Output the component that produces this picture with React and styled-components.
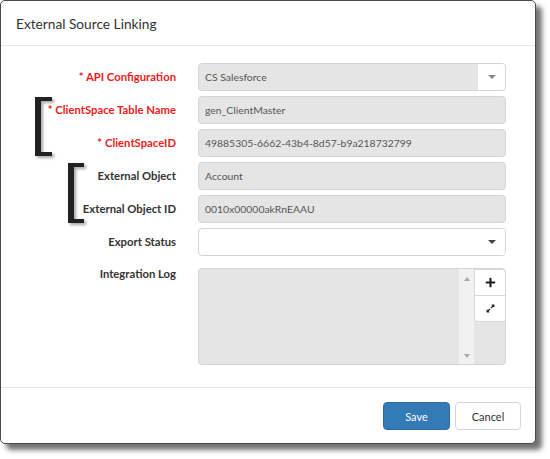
import React from 'react';
import styled, { createGlobalStyle } from 'styled-components';
import { FaPlus, FaExpandAlt } from 'react-icons/fa';

const GlobalStyle = createGlobalStyle`
    html, body {
        margin: 0;
        padding: 0;
        background: #ffffff;
    }
    body {
        font-family: Lato, 'Open Sans', Arial, sans-serif;
    }
`;

const Page = styled.div`
    width: 550px;
    height: 459px;
    overflow: hidden;
    position: relative;
`;

const Dialog = styled.div`
    position: relative;
    box-sizing: border-box;
    width: 536px;
    height: 444px;
    background: #fff;
    border: 1px solid #4a4a4a;
    border-radius: 5px;
    box-shadow: 6px 6px 5px rgba(0, 0, 0, 0.55);
    display: flex;
    flex-direction: column;
`;

const Header = styled.div`
    height: 45px;
    box-sizing: border-box;
    border-bottom: 1px solid #e8e8e8;
    display: flex;
    align-items: center;
    padding-left: 15px;
`;

const Title = styled.h4`
    margin: 0;
    font-size: 13.7px;
    font-weight: 400;
    color: #333;
`;

const Body = styled.div`
    flex: 1;
    padding: 17px 0 0 0;
    display: grid;
    grid-template-columns: 175px 308px;
    column-gap: 22px;
    row-gap: 5px;
    align-content: start;
`;

const Label = styled.label`
    justify-self: end;
    align-self: ${p => (p.top ? 'start' : 'center')};
    font-size: 11.3px;
    font-weight: 700;
    line-height: 14px;
    color: ${p => (p.required ? '#ee1b1b' : '#333')};
    margin-top: ${p => (p.top ? '6px' : '0')};
    white-space: nowrap;
`;

const Field = styled.div`
    box-sizing: border-box;
    height: 28px;
    display: flex;
    align-items: center;
    border: 1px solid #d4d4d4;
    border-radius: 4px;
    background: ${p => (p.empty ? '#fff' : '#e5e5e5')};
    font-size: 10.4px;
    color: #555;
    overflow: hidden;
`;

const FieldText = styled.span`
    flex: 1;
    padding-left: 6px;
    white-space: nowrap;
`;

const CaretBox = styled.div`
    width: 27px;
    height: 100%;
    background: #fff;
    display: flex;
    align-items: center;
    justify-content: center;
`;

const Caret = styled.span`
    width: 0;
    height: 0;
    border-left: 4px solid transparent;
    border-right: 4px solid transparent;
    border-top: 4px solid ${p => p.color || '#888'};
`;

const LogBox = styled.div`
    box-sizing: border-box;
    height: 97px;
    margin-top: 7px;
    display: flex;
    border: 1px solid #d4d4d4;
    border-radius: 4px;
    background: #e5e5e5;
    overflow: hidden;
`;

const LogText = styled.div`
    flex: 1;
`;

const ScrollBar = styled.div`
    width: 15px;
    background: #f1f1f1;
    display: flex;
    flex-direction: column;
    align-items: center;
    justify-content: space-between;
    padding: 8px 0 6px;
`;

const ScrollArrow = styled.span`
    width: 0;
    height: 0;
    border-left: 3.5px solid transparent;
    border-right: 3.5px solid transparent;
    border-${p => (p.up ? 'bottom' : 'top')}: 4px solid #a8a8a8;
`;

const ToolColumn = styled.div`
    width: 31px;
    display: flex;
    flex-direction: column;
`;

const ToolButton = styled.button`
    box-sizing: border-box;
    width: 32px;
    height: 27px;
    margin: ${p => (p.first ? '0' : '-1px')} -1px 0 0;
    padding: 0;
    background: #fff;
    border: 1px solid #d8d8d8;
    border-radius: ${p => (p.first ? '0 4px 0 0' : '0 0 0 4px')};
    display: flex;
    align-items: center;
    justify-content: center;
    color: #1e1e1e;
`;

const Footer = styled.div`
    box-sizing: border-box;
    height: 56px;
    border-top: 1px solid #e8e8e8;
    display: flex;
    justify-content: flex-end;
    align-items: flex-start;
    gap: 5px;
    padding: 14px 14px 0 0;
`;

const Button = styled.button`
    box-sizing: border-box;
    height: 28px;
    width: ${p => p.w}px;
    border-radius: 4px;
    font-family: inherit;
    font-size: 11px;
    cursor: pointer;
    background: ${p => (p.primary ? '#337ab7' : '#fff')};
    color: ${p => (p.primary ? '#fff' : '#333')};
    border: 1px solid ${p => (p.primary ? '#2e6da4' : '#d4d4d4')};
`;

// annotation brackets drawn over the screenshot
const Bracket = styled.div`
    position: absolute;
    box-sizing: border-box;
    left: ${p => p.x}px;
    top: ${p => p.y}px;
    width: ${p => p.w}px;
    height: ${p => p.h}px;
    border-left: 6px solid #222;
    border-top: 4px solid #222;
    border-bottom: 4px solid #222;
    filter: drop-shadow(2px 2px 1.5px rgba(0, 0, 0, 0.35));
`;

const rows = [
    { label: 'API Configuration', required: true, value: 'CS Salesforce', select: true },
    { label: 'ClientSpace Table Name', required: true, value: 'gen_ClientMaster' },
    { label: 'ClientSpaceID', required: true, value: '49885305-6662-43b4-8d57-b9a218732799' },
    { label: 'External Object', value: 'Account' },
    { label: 'External Object ID', value: '0010x00000akRnEAAU' },
];

const App = () => {
    return (
        <Page>
            <GlobalStyle />
            <Dialog>
                <Header>
                    <Title>External Source Linking</Title>
                </Header>
                <Body>
                    {rows.map(r => (
                        <React.Fragment key={r.label}>
                            <Label required={r.required}>
                                {r.required ? '* ' : ''}
                                {r.label}
                            </Label>
                            <Field>
                                <FieldText>{r.value}</FieldText>
                                {r.select && (
                                    <CaretBox>
                                        <Caret />
                                    </CaretBox>
                                )}
                            </Field>
                        </React.Fragment>
                    ))}
                    <Label>Export Status</Label>
                    <Field empty>
                        <FieldText />
                        <CaretBox>
                            <Caret color="#444" />
                        </CaretBox>
                    </Field>
                    <Label top>Integration Log</Label>
                    <LogBox>
                        <LogText />
                        <ScrollBar>
                            <ScrollArrow up />
                            <ScrollArrow />
                        </ScrollBar>
                        <ToolColumn>
                            <ToolButton first>
                                <FaPlus size={11} />
                            </ToolButton>
                            <ToolButton>
                                <FaExpandAlt size={9} />
                            </ToolButton>
                        </ToolColumn>
                    </LogBox>
                </Body>
                <Footer>
                    <Button primary w={67}>Save</Button>
                    <Button w={66}>Cancel</Button>
                </Footer>
                <Bracket x={34} y={96} w={17} h={59} />
                <Bracket x={67} y={162} w={16} h={60} />
            </Dialog>
        </Page>
    );
};

export default App;
